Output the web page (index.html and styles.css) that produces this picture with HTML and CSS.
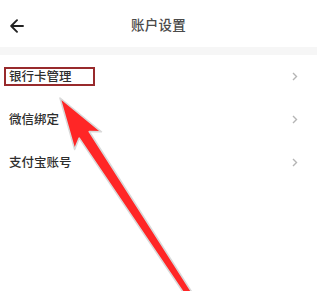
FILE: index.html
```html
<!DOCTYPE html>
<html lang="zh">
<head>
<meta charset="utf-8">
<link rel="stylesheet" href="styles.css">
</head>
<body>
<div class="page">
  <header class="topbar">
    <span class="back">
      <svg width="14" height="14" viewBox="0 0 14 14"><path d="M13 7H1.8M7 1.2L1.2 7 7 12.8" fill="none" stroke="#222" stroke-width="1.9" stroke-linecap="round" stroke-linejoin="round"/></svg>
    </span>
    <h1 class="title">账户设置</h1>
  </header>
  <div class="band"></div>
  <ul class="list">
    <li class="row">
      <span class="label">银行卡管理</span>
      <span class="mark"></span>
      <svg class="chev" width="6" height="9" viewBox="0 0 6 9"><path d="M1 1l3.5 3.5L1 8" fill="none" stroke="#b5b5b5" stroke-width="1.4"/></svg>
    </li>
    <li class="row">
      <span class="label">微信绑定</span>
      <svg class="chev" width="6" height="9" viewBox="0 0 6 9"><path d="M1 1l3.5 3.5L1 8" fill="none" stroke="#b5b5b5" stroke-width="1.4"/></svg>
    </li>
    <li class="row">
      <span class="label">支付宝账号</span>
      <svg class="chev" width="6" height="9" viewBox="0 0 6 9"><path d="M1 1l3.5 3.5L1 8" fill="none" stroke="#b5b5b5" stroke-width="1.4"/></svg>
    </li>
  </ul>
  <svg class="pointer" width="317" height="291" viewBox="0 0 317 291">
    <polygon points="60,98 101.4,131.8 89.2,131.5 197.4,300.9 191.6,304.7 79.2,138.1 74.6,149.4" fill="#ff2626" stroke="#d9d9d9" stroke-width="1.6" stroke-linejoin="round"/>
  </svg>
</div>
</body>
</html>
```
FILE: styles.css
```css
* { box-sizing: border-box; }
html, body { margin: 0; padding: 0; background: #fff; }
body {
  font-family: "Noto Sans CJK SC", "Noto Sans", sans-serif;
  width: 317px;
  height: 291px;
  overflow: hidden;
}
.page { position: relative; width: 317px; height: 291px; }
.topbar {
  position: relative;
  height: 47px;
  display: flex;
  align-items: center;
  justify-content: center;
}
.back {
  position: absolute;
  left: 10px;
  top: 19px;
  width: 14px;
  height: 14px;
  display: flex;
}
.title {
  margin: 0;
  font-size: 13.5px;
  font-weight: 500;
  color: #4a4a4a;
  letter-spacing: 0.3px;
  line-height: 1;
  padding-top: 3px;
}
.band { height: 8px; background: #f6f6f6; }
.list { list-style: none; margin: 0; padding: 0; }
.row {
  position: relative;
  height: 43px;
  display: flex;
  align-items: center;
  justify-content: space-between;
  padding: 0 19px 0 9px;
}
.label {
  font-size: 12.5px;
  font-weight: 500;
  color: #2e2e2e;
  line-height: 1;
}
.mark {
  position: absolute;
  left: 4px;
  top: 11.5px;
  width: 91px;
  height: 19px;
  border: 2px solid #982a2c;
}
.chev { display: block; }
.pointer { position: absolute; left: 0; top: 0; pointer-events: none; }
```
